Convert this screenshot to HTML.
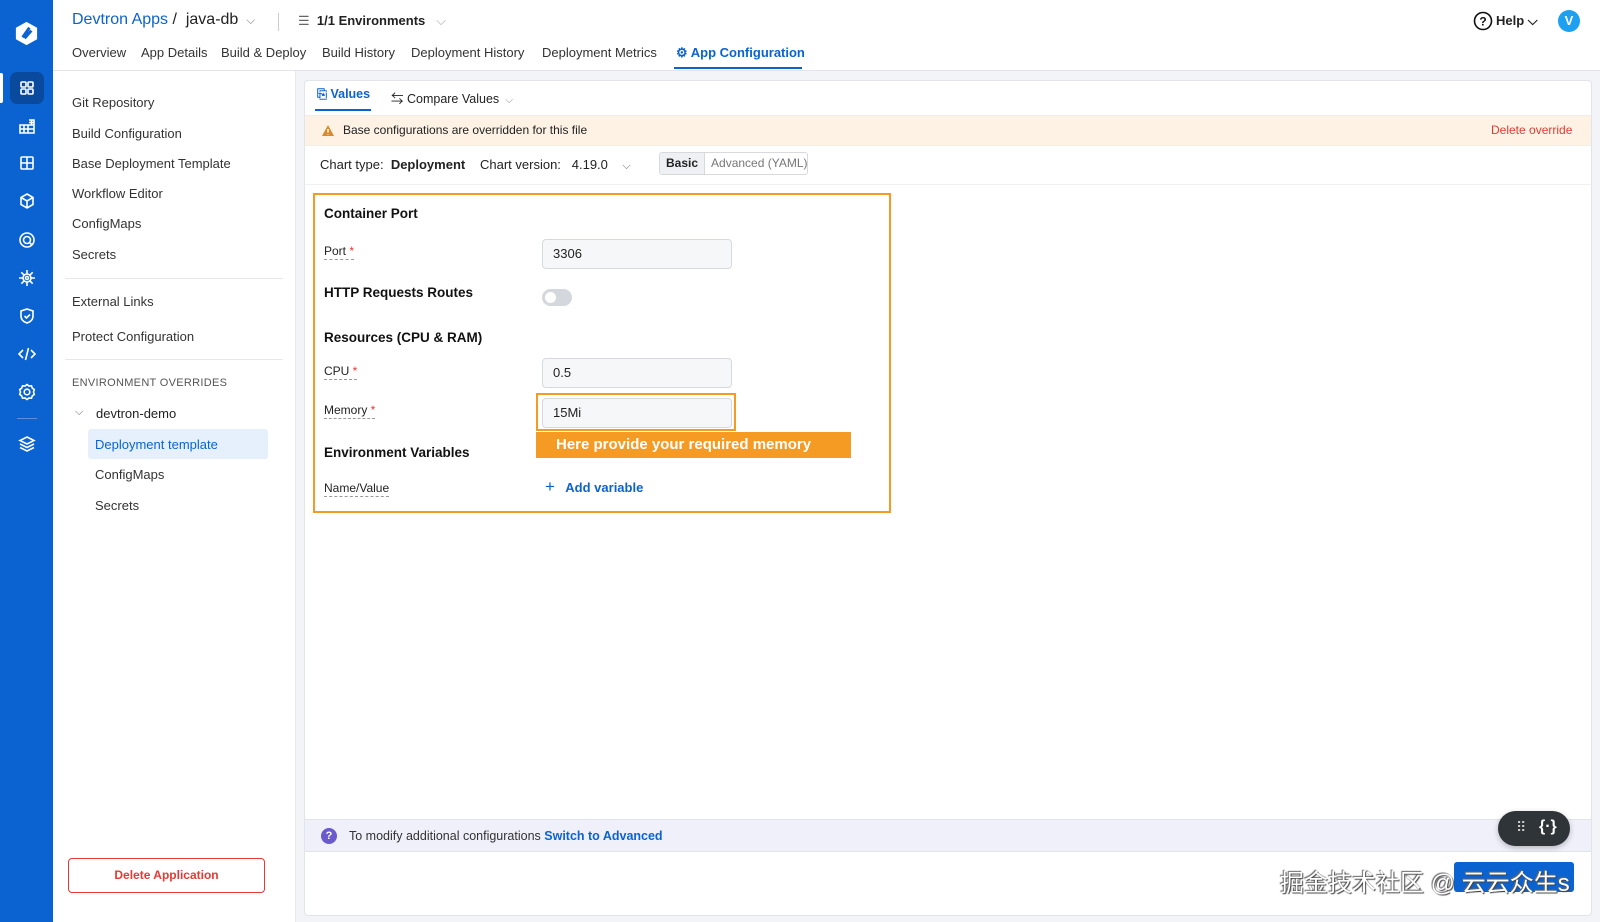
<!DOCTYPE html>
<html><head><meta charset="utf-8"><style>
*{box-sizing:border-box;margin:0;padding:0}
body{width:1600px;height:922px;overflow:hidden;background:#f2f4f7;font-family:"Liberation Sans","Noto Sans CJK SC",sans-serif;font-size:13px;color:#333;position:relative}
.a{position:absolute;white-space:nowrap}
.sb{left:0;top:0;width:53px;height:922px;background:#0b63d1}
.hd{left:53px;top:0;width:1547px;height:71px;background:#fff;border-bottom:1px solid #e1e4e8}
.lp{left:53px;top:71px;width:243px;height:851px;background:#fff;border-right:1px solid #e6e8ec}
.card{left:304px;top:80px;width:1288px;height:836px;background:#fff;border:1px solid #e1e4e8;border-radius:4px}
.ic{position:absolute;left:17px;width:20px;height:20px}
.lbl{font-size:12px;color:#222;border-bottom:1px dashed #999;padding-bottom:1px}
.star{color:#e53935}
.inp{background:#f6f7f9;border:1px solid #d6d9de;border-radius:4px;padding:0 10px;line-height:28px;font-size:13px;color:#222}
h4{font-weight:bold;font-size:13.5px;color:#111}
</style></head><body>
<div class="a sb">
<svg style="position:absolute;left:13px;top:20px" width="27" height="27" viewBox="0 0 28 28"><path d="M14 2 L25 8 V20 L14 26 L3 20 V8Z" fill="#fff"/><path d="M10 18 L17 8 M12 19 L19 11" stroke="#0b63d1" stroke-width="3" fill="none"/></svg>
<div style="position:absolute;left:0;top:73px;width:3px;height:30px;background:#fff;border-radius:0 2px 2px 0"></div>
<div style="position:absolute;left:10px;top:72px;width:34px;height:32px;background:#0a4a9e;border-radius:7px"></div>
<svg class="ic" style="top:78px" viewBox="0 0 20 20" fill="none" stroke="#fff" stroke-width="1.6"><rect x="4" y="4" width="5" height="5" rx="1"/><rect x="11" y="4" width="5" height="5" rx="1"/><rect x="4" y="11" width="5" height="5" rx="1"/><rect x="11" y="11" width="5" height="5" rx="1"/></svg>
<svg class="ic" style="top:116px" viewBox="0 0 20 20" fill="none" stroke="#fff" stroke-width="1.6"><path d="M3 9h14v8H3zM3 13h14M7 9v8M11 9v8M12 4h5v5M12 6.5h5M14.5 4v5"/></svg>
<svg class="ic" style="top:153px" viewBox="0 0 20 20" fill="none" stroke="#fff" stroke-width="1.6"><rect x="4" y="4" width="12" height="12" rx="1"/><path d="M10 4v12M4 10h12"/></svg>
<svg class="ic" style="top:191px" viewBox="0 0 20 20" fill="none" stroke="#fff" stroke-width="1.6"><path d="M10 3l6 3.5v7L10 17l-6-3.5v-7zM4 6.5l6 3.5 6-3.5M10 10v7"/></svg>
<svg class="ic" style="top:230px" viewBox="0 0 20 20" fill="none" stroke="#fff" stroke-width="1.6"><circle cx="10" cy="10" r="7"/><circle cx="10" cy="10" r="3.5"/><path d="M12.5 12.5l2 2"/></svg>
<svg class="ic" style="top:268px" viewBox="0 0 20 20" fill="none" stroke="#fff" stroke-width="1.6"><circle cx="10" cy="10" r="4"/><circle cx="10" cy="10" r="1.5"/><path d="M10 2v4M10 14v4M2 10h4M14 10h4M4.3 4.3l2.9 2.9M12.8 12.8l2.9 2.9M4.3 15.7l2.9-2.9M12.8 7.2l2.9-2.9"/></svg>
<svg class="ic" style="top:306px" viewBox="0 0 20 20" fill="none" stroke="#fff" stroke-width="1.6"><path d="M10 3l6 2v5c0 4-3 6-6 7-3-1-6-3-6-7V5z"/><path d="M7.5 10l2 2 3.5-3.5"/></svg>
<svg class="ic" style="top:344px" viewBox="0 0 20 20" fill="none" stroke="#fff" stroke-width="1.6"><path d="M6 6l-4 4 4 4M14 6l4 4-4 4M11.5 4l-3 12"/></svg>
<svg class="ic" style="top:382px" viewBox="0 0 20 20" fill="none" stroke="#fff" stroke-width="1.6"><path d="M10 2.5l2 1.5 2.5-.2.8 2.3 2 1.5-.8 2.4.8 2.4-2 1.5-.8 2.3-2.5-.2-2 1.5-2-1.5-2.5.2-.8-2.3-2-1.5.8-2.4-.8-2.4 2-1.5.8-2.3 2.5.2z"/><circle cx="10" cy="10" r="2.8"/></svg>
<div style="position:absolute;left:17px;top:418px;width:20px;height:1px;background:#5a90dd"></div>
<svg class="ic" style="top:434px" viewBox="0 0 20 20" fill="none" stroke="#fff" stroke-width="1.6"><path d="M10 3l7 3.5-7 3.5-7-3.5zM3 10l7 3.5 7-3.5M3 13.5l7 3.5 7-3.5"/></svg>
</div>

<div class="a hd">
<div class="a" style="left:19px;top:11px;font-size:16px;color:#0b63d1">Devtron Apps <span style="color:#222">/ &nbsp;java-db</span> <span style="color:#888;font-size:12px">&nbsp;⌵</span></div>
<div class="a" style="left:225px;top:13px;width:1px;height:18px;background:#ccc"></div>
<div class="a" style="left:245px;top:13px;font-size:13px;color:#222"><span style="color:#666">☰</span>&nbsp; <b>1/1 Environments</b> <span style="color:#aaa">&nbsp;&nbsp;⌵</span></div>
<div class="a" style="left:19px;top:45px;font-size:13px;color:#333">Overview</div>
<div class="a" style="left:88px;top:45px;color:#333">App Details</div>
<div class="a" style="left:168px;top:45px;color:#333">Build &amp; Deploy</div>
<div class="a" style="left:269px;top:45px;color:#333">Build History</div>
<div class="a" style="left:358px;top:45px;color:#333">Deployment History</div>
<div class="a" style="left:489px;top:45px;color:#333">Deployment Metrics</div>
<div class="a" style="left:623px;top:45px;color:#0b63d1;font-weight:bold">⚙ App Configuration</div>
<div class="a" style="left:621px;top:67px;width:128px;height:2px;background:#0b63d1"></div>
<svg class="a" style="left:1420px;top:11px" width="20" height="20" viewBox="0 0 20 20"><circle cx="10" cy="10" r="8.5" fill="none" stroke="#111" stroke-width="1.6"/><text x="10" y="14.5" font-size="12" font-weight="bold" text-anchor="middle" fill="#111" font-family="Liberation Sans">?</text></svg>
<div class="a" style="left:1443px;top:13px;font-size:13px;font-weight:bold;color:#222">Help ⌵</div>
<div class="a" style="left:1505px;top:10px;width:22px;height:22px;border-radius:50%;background:#1ca0f2;color:#fff;font-weight:bold;text-align:center;line-height:22px;font-size:13px">V</div>
</div>

<div class="a lp">
<div class="a" style="left:19px;top:24px">Git Repository</div>
<div class="a" style="left:19px;top:55px">Build Configuration</div>
<div class="a" style="left:19px;top:85px">Base Deployment Template</div>
<div class="a" style="left:19px;top:115px">Workflow Editor</div>
<div class="a" style="left:19px;top:145px">ConfigMaps</div>
<div class="a" style="left:19px;top:176px">Secrets</div>
<div class="a" style="left:12px;top:207px;width:218px;height:1px;background:#e6e8ec"></div>
<div class="a" style="left:19px;top:223px">External Links</div>
<div class="a" style="left:19px;top:258px">Protect Configuration</div>
<div class="a" style="left:12px;top:288px;width:218px;height:1px;background:#e6e8ec"></div>
<div class="a" style="left:19px;top:306px;font-size:11px;color:#555;letter-spacing:.3px">ENVIRONMENT OVERRIDES</div>
<div class="a" style="left:22px;top:335px;color:#666;font-size:11px">⌵</div>
<div class="a" style="left:43px;top:335px;color:#222">devtron-demo</div>
<div class="a" style="left:35px;top:358px;width:180px;height:30px;background:#e5f0fc;border-radius:3px"></div>
<div class="a" style="left:42px;top:366px;color:#0b63d1">Deployment template</div>
<div class="a" style="left:42px;top:396px">ConfigMaps</div>
<div class="a" style="left:42px;top:427px">Secrets</div>
<div class="a" style="left:15px;top:787px;width:197px;height:35px;border:1px solid #e53935;border-radius:4px;color:#e53935;font-size:12px;text-align:center;line-height:33px;font-weight:bold">Delete Application</div>
</div>

<div class="a card">
<div class="a" style="left:12px;top:6px;color:#0b63d1;font-weight:bold;font-size:12.5px">⎘ Values</div>
<div class="a" style="left:10px;top:28px;width:56px;height:2px;background:#0b63d1"></div>
<div class="a" style="left:86px;top:7px;font-size:12.5px;color:#222">⇆ Compare Values <span style="color:#888;font-size:10px">&nbsp;⌵</span></div>
<div class="a" style="left:0;top:34px;width:1286px;height:31px;background:#fdf2e4;border-top:1px solid #eee;border-bottom:1px solid #eee"></div>
<svg class="a" style="left:16px;top:43px" width="14" height="13" viewBox="0 0 14 13"><path d="M7 1L13 12H1z" fill="#d98a2b"/><path d="M7 5v3.5M7 10v.5" stroke="#fff" stroke-width="1.5"/></svg>
<div class="a" style="left:38px;top:42px;font-size:12px;color:#222">Base configurations are overridden for this file</div>
<div class="a" style="left:1186px;top:42px;font-size:12px;color:#e53935">Delete override</div>
<div class="a" style="left:15px;top:76px;color:#222">Chart type: &nbsp;<b>Deployment</b></div>
<div class="a" style="left:175px;top:76px;color:#222">Chart version: &nbsp;&nbsp;4.19.0 &nbsp;&nbsp;&nbsp;<span style="color:#666;font-size:11px">⌵</span></div>
<div class="a" style="left:354px;top:71px;width:149px;height:23px;border:1px solid #d6d9de;border-radius:3px;font-size:12px;line-height:21px;overflow:hidden"><span style="display:inline-block;background:#eef0f3;padding:0 6px;border-right:1px solid #d6d9de;font-weight:bold;color:#222">Basic</span><span style="color:#777;padding-left:6px">Advanced (YAML)</span></div>
<div class="a" style="left:0;top:103px;width:1286px;height:1px;background:#eef0f3"></div>

<div class="a" style="left:8px;top:112px;width:578px;height:320px;border:2px solid #f59a23"></div>
<h4 class="a" style="left:19px;top:125px">Container Port</h4>
<div class="a" style="left:19px;top:162px"><span class="lbl">Port <span class="star">*</span></span></div>
<div class="a inp" style="left:237px;top:158px;width:190px">3306</div>
<h4 class="a" style="left:19px;top:204px">HTTP Requests Routes</h4>
<div class="a" style="left:237px;top:208px;width:30px;height:17px;border-radius:9px;background:#d4d7dc"><div style="position:absolute;left:3px;top:3px;width:11px;height:11px;border-radius:50%;background:#fff"></div></div>
<h4 class="a" style="left:19px;top:249px">Resources (CPU &amp; RAM)</h4>
<div class="a" style="left:19px;top:282px"><span class="lbl">CPU <span class="star">*</span></span></div>
<div class="a inp" style="left:237px;top:277px;width:190px">0.5</div>
<div class="a" style="left:19px;top:321px"><span class="lbl">Memory <span class="star">*</span></span></div>
<div class="a inp" style="left:237px;top:317px;width:190px">15Mi</div>
<div class="a" style="left:231px;top:312px;width:200px;height:38px;border:2px solid #f59a23"></div>
<div class="a" style="left:231px;top:351px;width:315px;height:26px;background:#f59a23;color:#fff;font-weight:bold;font-size:15px;line-height:26px;padding-left:20px">Here provide your required memory</div>
<h4 class="a" style="left:19px;top:364px">Environment Variables</h4>
<div class="a" style="left:19px;top:399px"><span class="lbl">Name/Value</span></div>
<div class="a" style="left:240px;top:396px;color:#0b63d1;font-weight:bold;font-size:13px"><span style="font-size:17px;font-weight:normal">+</span>&nbsp;&nbsp; Add variable</div>

<div class="a" style="left:0;top:738px;width:1286px;height:33px;background:#f0f0fb;border-top:1px solid #e1e4e8;border-bottom:1px solid #e1e4e8"></div>
<div class="a" style="left:16px;top:747px;width:16px;height:16px;border-radius:50%;background:#6a5acd;color:#fff;font-size:11px;font-weight:bold;text-align:center;line-height:16px">?</div>
<div class="a" style="left:44px;top:748px;font-size:12.5px;color:#333">To modify additional configurations <b style="color:#0b63d1">Switch to Advanced</b></div>
<div class="a" style="left:1193px;top:730px;width:72px;height:35px;border-radius:18px;background:#2f3438;box-shadow:0 2px 6px rgba(0,0,0,.25);color:#fff"><span style="position:absolute;left:18px;top:8px;font-size:14px;letter-spacing:-1px;color:#ccc">⠿</span><span style="position:absolute;left:41px;top:7px;font-size:16px;font-weight:bold">{·}</span></div>
<div class="a" style="left:1149px;top:781px;width:120px;height:30px;background:#0b63d1;border-radius:3px"></div>
<div class="a" style="left:975px;top:782px;font-size:24px;color:#fff;text-shadow:1px 1px 1px #444,-1px -1px 1px #666">掘金技术社区 @ 云云众生s</div>
</div>
</body></html>
